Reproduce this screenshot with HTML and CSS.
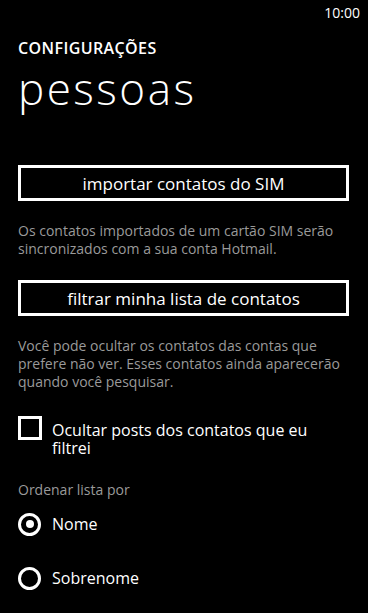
FILE: index.html
```html
<!DOCTYPE html>
<html lang="pt-BR">
<head>
    <meta charset="UTF-8">
    <meta name="viewport" content="width=device-width, initial-scale=1.0">
    <title>configurações - pessoas</title>
    <link rel="stylesheet" href="styles.css">
</head>
<body>
    <div class="status-bar">
        <span class="clock">10:00</span>
    </div>
    <div class="page">
        <div class="app-title">CONFIGURAÇÕES</div>
        <h1 class="page-title">pessoas</h1>

        <div class="section">
            <button class="btn">importar contatos do SIM</button>
            <p class="hint">Os contatos importados de um cartão SIM serão sincronizados com a sua conta Hotmail.</p>
        </div>

        <div class="section">
            <button class="btn">filtrar minha lista de contatos</button>
            <p class="hint">Você pode ocultar os contatos das contas que prefere não ver. Esses contatos ainda aparecerão quando você pesquisar.</p>
        </div>

        <label class="check">
            <span class="box"></span>
            <span class="check-label">Ocultar posts dos contatos que eu filtrei</span>
        </label>

        <div class="group-label">Ordenar lista por</div>
        <label class="radio">
            <span class="ring checked"></span>
            <span>Nome</span>
        </label>
        <label class="radio">
            <span class="ring"></span>
            <span>Sobrenome</span>
        </label>
    </div>
</body>
</html>
```

FILE: styles.css
```css
body {
    margin: 0;
    background: #000;
    color: #fff;
    font-family: "Open Sans", "Noto Sans", sans-serif;
    width: 368px;
    height: 613px;
    overflow: hidden;
}
.status-bar {
    height: 24px;
    display: flex;
    justify-content: flex-end;
    align-items: center;
    padding-right: 8px;
}
.clock {
    font-size: 14px;
}
.page {
    padding: 0 19px 0 18px;
}
.app-title {
    margin-top: 14px;
    font-size: 16px;
    font-weight: 600;
    line-height: 20px;
    letter-spacing: 0.4px;
}
.page-title {
    margin: 4px 0 0;
    font-size: 44px;
    font-weight: 300;
    line-height: 52px;
    letter-spacing: 2.5px;
}
.section {
    margin-top: 51px;
}
.section + .section {
    margin-top: 22px;
}
.btn {
    display: block;
    width: 100%;
    height: 36px;
    background: transparent;
    color: #fff;
    border: 3px solid #fff;
    font-family: inherit;
    font-size: 17px;
    padding: 0;
}
.hint {
    margin: 21px 0 0;
    color: #9a9a9a;
    font-size: 14px;
    line-height: 18px;
}
.check {
    display: flex;
    align-items: flex-start;
    margin-top: 25px;
}
.box {
    flex: none;
    width: 18px;
    height: 18px;
    border: 3px solid #fff;
}
.check-label {
    margin: 5px 0 0 10px;
    font-size: 16px;
    line-height: 18px;
}
.group-label {
    margin-top: 24px;
    color: #9a9a9a;
    font-size: 14px;
    line-height: 18px;
}
.radio {
    display: flex;
    align-items: center;
    height: 34px;
    margin-top: 8px;
    font-size: 16px;
}
.radio + .radio {
    margin-top: 20px;
}
.ring {
    flex: none;
    width: 17px;
    height: 17px;
    border: 3px solid #fff;
    border-radius: 50%;
    margin-right: 11px;
    display: flex;
    align-items: center;
    justify-content: center;
}
.ring.checked::after {
    content: "";
    width: 8px;
    height: 8px;
    border-radius: 50%;
    background: #fff;
}
```
